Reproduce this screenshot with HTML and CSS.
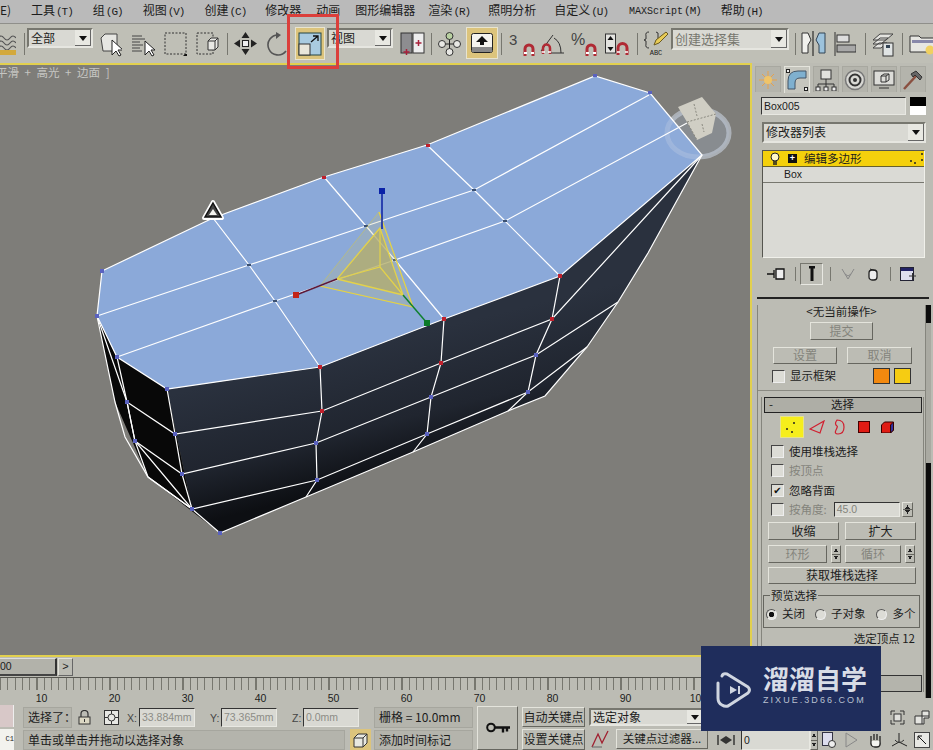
FILE: index.html
```html
<!DOCTYPE html>
<html lang="zh">
<head>
<meta charset="utf-8">
<title>3ds Max</title>
<link rel="stylesheet" href="styles.css">
</head>
<body>
<div class="app">
  <nav class="menu">
    <span class="m-e">E)</span><span class="m-tool">工具<i>(T)</i></span><span>组<i>(G)</i></span><span>视图<i>(V)</i></span><span>创建<i>(C)</i></span><span class="mn1">修改器</span><span class="mn5">动画</span><span class="mn5">图形编辑器</span><span class="mn7">渲染<i>(R)</i></span><span class="mn2">照明分析</span><span class="mn2">自定义<i>(U)</i></span><span class="m-script">MAXScript<i>(M)</i></span><span>帮助<i>(H)</i></span>
  </nav>

  <div class="toolbar">
    <svg width="16" height="26" viewBox="0 0 16 26"><path d="M-2 7q3-4 6 0t6 0 6 0M-2 12q3-4 6 0t6 0 6 0M-2 17q3-4 6 0t6 0 6 0" fill="none" stroke="#555" stroke-width="1.2"/><rect x="-2" y="19" width="18" height="5" fill="#d3a93c"/></svg>
    <i class="sep ml8"></i>
    <div class="dd tb-dd ml2"><span>全部</span><b class="arrow"></b></div>
    <svg class="ml7" width="22" height="26" viewBox="0 0 22 26"><path d="M1 7l4-4h12v15l-4 2H3z" fill="#e6e6e2" stroke="#444"/><path d="M12 9v15l4-4 3 5 2-1-3-5h5z" fill="#fff" stroke="#222"/></svg>
    <svg class="ml9" width="25" height="26" viewBox="0 0 25 26"><path d="M1 5h10M1 8h13M1 11h8M1 14h11M1 17h8M1 20h10" stroke="#444"/><path d="M14 10v14l4-4 3 5 2-1-3-5h4z" fill="#fff" stroke="#222"/></svg>
    <svg class="ml8" width="23" height="26" viewBox="0 0 23 26"><rect x="1" y="2" width="21" height="21" fill="none" stroke="#333" stroke-dasharray="2 1.5"/><path d="M21 23h2v2h-4z" fill="#111"/></svg>
    <svg class="ml9" width="24" height="26" viewBox="0 0 24 26"><rect x="1" y="2" width="16" height="21" fill="none" stroke="#333" stroke-dasharray="2 1.5"/><path d="M12 10l3-3h7v9l-3 3h-7z" fill="#e8e8e4" stroke="#333"/><path d="M12 10h7v9M19 10l3-3" fill="none" stroke="#333"/></svg>
    <i class="sep ml7"></i>
    <svg class="ml6" width="23" height="26" viewBox="0 0 23 26"><path d="M11.500 1l4 6h-8zM11.500 24l4-6h-8zM0 12.500l6-4v8zM23 12.500l-6-4v8z" fill="#222"/><rect x="8.500" y="9.500" width="6" height="6" fill="#eee" stroke="#222"/></svg>
    <svg class="ml10" width="20" height="26" viewBox="0 0 20 26"><path d="M12 4A10 10 0 1 0 19 20" fill="none" stroke="#555" stroke-width="1.6"/><path d="M9 1l5 3-5 4z" fill="#555"/></svg>
    <div class="scale-btn ml8">
      <svg width="24" height="24" viewBox="0 0 24 24"><rect x="1" y="1" width="22" height="22" fill="#a9cbe0" stroke="#244"/><rect x="1" y="12" width="11" height="11" fill="#e9e6da" stroke="#333"/><path d="M13 10l7-6M15 4h5v5" fill="none" stroke="#111" stroke-width="1.300"/></svg>
    </div>
    <div class="dd tb-dd ml2"><span>视图</span><b class="arrow"></b></div>
    <svg class="ml7" width="25" height="26" viewBox="0 0 25 26"><rect x="1" y="2" width="11" height="20" fill="#8d8d90" stroke="#333"/><rect x="13" y="2" width="11" height="20" fill="#eee" stroke="#333"/><path d="M6.500 18v6M3.500 21h6M18.500 9v6M15.500 12h6" stroke="#a8203a" stroke-width="1.500"/></svg>
    <i class="sep ml6"></i>
    <svg class="ml6" width="23" height="26" viewBox="0 0 23 26"><path d="M11.500 7v12M4 13h15" stroke="#222"/><circle cx="11.500" cy="5" r="3.500" fill="#b8d0a0" stroke="#333"/><circle cx="4" cy="13" r="3.500" fill="#e8e8e4" stroke="#333"/><circle cx="19" cy="13" r="3.500" fill="#e8e8e4" stroke="#333"/><circle cx="11.500" cy="21" r="3.500" fill="#e8e8e4" stroke="#333"/></svg>
    <div class="active-btn ml5">
      <svg width="22" height="20" viewBox="0 0 22 20"><rect x="0.500" y="0.500" width="21" height="19" rx="2" fill="#f4f3ee" stroke="#222"/><rect x="1" y="14" width="20" height="5" fill="#888"/><path d="M11 3l6 6h-4v3H9V9H5z" fill="#111"/></svg>
    </div>
    <i class="sep ml3"></i>
    <div class="snap ml7"><span class="snap-t">3</span><svg class="mag" width="12" height="14" viewBox="0 0 12 14"><path d="M2 13V6a4 4 0 0 1 8 0v7" fill="none" stroke="#b02a34" stroke-width="3"/><path d="M1 10h3M8 10h3" stroke="#fff" stroke-width="2"/></svg></div>
    <svg class="ml5" width="25" height="26" viewBox="0 0 25 26"><path d="M1 20L13 4M24 22H10M14 7q7 4 7 15" fill="none" stroke="#333"/><path d="M3 23v-6a3.500 3.500 0 0 1 7 0v6" fill="none" stroke="#b02a34" stroke-width="2.500"/><path d="M2 21h3M8 21h3" stroke="#fff" stroke-width="1.500"/></svg>
    <div class="snap ml6"><span class="snap-t snap-p">%</span><svg class="mag" width="12" height="14" viewBox="0 0 12 14"><path d="M2 13V6a4 4 0 0 1 8 0v7" fill="none" stroke="#b02a34" stroke-width="3"/><path d="M1 10h3M8 10h3" stroke="#fff" stroke-width="2"/></svg></div>
    <svg class="ml8" width="24" height="26" viewBox="0 0 24 26"><rect x="0.500" y="3" width="10" height="19" fill="#e4e4e0" stroke="#333"/><path d="M5.500 5l3 4h-6zM5.500 20l3-4h-6z" fill="#111"/><path d="M13 24v-7a4.500 4.500 0 0 1 9 0v7" fill="none" stroke="#b02a34" stroke-width="3"/><path d="M12 21h3M20 21h3" stroke="#fff" stroke-width="1.500"/></svg>
    <i class="sep ml8"></i>
    <div class="abc ml5"><svg width="26" height="18" viewBox="0 0 26 18"><path d="M6 1Q2 1 3 5t-2 4q3 0 2 4t3 4" fill="none" stroke="#333"/><path d="M13 1q3 0 2 4t2 4" fill="none" stroke="#333"/><path d="M11 14l2-5 10-8 2 2-9 9z" fill="#e9cc56" stroke="#6a5a20"/></svg><span>ABC</span></div>
    <div class="dd set-dd ml2"><span>创建选择集</span><b class="arrow"></b></div>
    <i class="sep ml6"></i>
    <svg class="ml5" width="25" height="26" viewBox="0 0 25 26"><path d="M1 2h6l3 7-3 5v8H1z" fill="#f0f0ec" stroke="#333"/><path d="M12 0v25" stroke="#111"/><path d="M24 2h-6l-3 7 3 5v8h6z" fill="#9cc2dc" stroke="#345"/></svg>
    <svg class="ml8" width="22" height="26" viewBox="0 0 22 26"><path d="M1 1v24" stroke="#333"/><rect x="3" y="4" width="12" height="7" fill="#ddd" stroke="#333"/><rect x="3" y="14" width="19" height="7" fill="#a8a8a8" stroke="#333"/></svg>
    <i class="sep ml9"></i>
    <svg class="ml6" width="22" height="26" viewBox="0 0 22 26"><path d="M1 9l7-6h13l-7 6zM1 13l7-6h8l-7 6zM1 17l6-5h8l-6 5z" fill="#e4e4e0" stroke="#444"/><rect x="11" y="12" width="10" height="13" fill="#e0e4e4" stroke="#333"/><rect x="14" y="14" width="4" height="3" fill="#345"/></svg>
    <i class="sep ml8"></i>
    <svg class="ml6" width="25" height="26" viewBox="0 0 25 26"><path d="M1 5h9l2 2h13v14H1z" fill="#e6e6e2" stroke="#333"/><rect x="3" y="9" width="22" height="3" fill="#88a"/><circle cx="21" cy="19" r="4.500" fill="#f0d060"/></svg>
  </div>

  <div class="stage">
    <div class="left-col">
      <div class="viewport">
        <svg class="scene" width="750" height="590" viewBox="0 65 750 590">
          <defs>
            <linearGradient id="sideFill" gradientUnits="userSpaceOnUse" x1="430" y1="330" x2="462" y2="458">
              <stop offset="0" stop-color="#2a313e"/>
              <stop offset="0.6" stop-color="#20252f"/>
              <stop offset="1" stop-color="#0d0f13"/>
            </linearGradient>
          </defs>
          <ellipse cx="698" cy="133" rx="31" ry="24" fill="#8f9396" fill-opacity="0.45" stroke="#b8bcc0" stroke-width="5" stroke-opacity="0.6"/>
          <polygon points="167,389 320,367 444,319 560,276 702,155 648,253 618,302 587,347 545,396 508,411 413,452 306,497 220,533 192,509" fill="url(#sideFill)"/>
          <polygon points="97,316 117,357 167,389 192,509 220,533 148,477 115,402" fill="#080808"/>
          <polygon points="102,271 213,218 324,177 427,145 595,76 650,93 702,155 560,276 444,319 320,367 167,389 117,357 97,316" fill="#8ba9d9"/>
          <ellipse cx="698" cy="133" rx="31" ry="24" fill="#a8bfdf" fill-opacity="0.12" stroke="#c6d2e4" stroke-width="5" stroke-opacity="0.3"/>
          <g class="cube">
            <polygon points="678,107 702,97 716,114 712,133 697,140 687,122" fill="#d0cec4"/>
            <path d="M687 122l29-8M687 122l10 18M694 104l3 12M702 124l2 8" fill="none" stroke="#8a8980" stroke-dasharray="2 1.500"/>
          </g>
          <g class="edges">
            <polyline points="102,271 97,316 117,357 167,389 320,367 444,319 560,276 702,155 650,93 595,76 427,145 324,177 213,218 102,271"/>
            <polyline points="97,316 249,265 366,226 474,190 649,95"/>
            <polyline points="117,357 275,301 395,260 505,221 687,123"/>
            <polyline points="213,218 249,265 275,301 320,367"/>
            <polyline points="324,177 366,226 395,260 444,319"/>
            <polyline points="427,145 474,190 505,221 560,276"/>
            <polyline points="702,155 648,253 618,302 587,347 545,396 508,411 413,452 306,497 220,533 192,509 148,477 125,437 115,402 97,316"/>
            <polyline points="97,316 127,402 135,441 148,477"/>
            <polyline points="117,357 127,402 135,441 192,509"/>
            <polyline points="127,402 175,434 322,411 441,363 552,319 702,155"/>
            <polyline points="135,441 182,474 316,443 431,397 536,355 618,302"/>
            <polyline points="148,477 192,509 317,480 427,434 528,392 587,347"/>
            <polyline points="167,389 175,434 182,474 192,509"/>
            <polyline points="320,367 322,411 316,443 317,480 306,497"/>
            <polyline points="444,319 441,363 431,397 427,434 413,452"/>
            <polyline points="560,276 552,319 536,355 528,392 508,411"/>
          </g>
          <g class="dots-red">
            <rect x="322" y="176" width="4" height="3"/><rect x="426" y="144" width="4" height="3"/><rect x="318" y="365" width="4" height="4"/><rect x="442" y="317" width="4" height="4"/><rect x="558" y="274" width="4" height="4"/><rect x="320" y="409" width="4" height="4"/><rect x="439" y="361" width="4" height="4"/><rect x="550" y="317" width="4" height="4"/>
          </g>
          <g class="dots-blue">
            <rect x="100" y="269" width="4" height="4"/><rect x="95" y="314" width="4" height="4"/><rect x="115" y="355" width="4" height="4"/><rect x="165" y="387" width="4" height="4"/><rect x="173" y="432" width="4" height="4"/><rect x="180" y="472" width="4" height="4"/><rect x="190" y="507" width="4" height="4"/><rect x="218" y="531" width="4" height="4"/><rect x="125" y="400" width="4" height="4"/><rect x="133" y="439" width="4" height="4"/><rect x="314" y="441" width="4" height="4"/><rect x="315" y="478" width="4" height="4"/><rect x="429" y="395" width="4" height="4"/><rect x="425" y="432" width="4" height="4"/><rect x="534" y="353" width="4" height="4"/><rect x="526" y="390" width="4" height="4"/><rect x="593" y="74" width="4" height="3"/><rect x="648" y="91" width="4" height="3"/>
          </g>
          <g class="dots-dark">
            <rect x="247" y="264" width="4" height="2"/><rect x="273" y="300" width="4" height="2"/><rect x="364" y="225" width="4" height="2"/><rect x="393" y="259" width="4" height="2"/><rect x="472" y="189" width="4" height="2"/><rect x="503" y="220" width="4" height="2"/>
          </g>
          <g class="gizmo">
            <polygon points="379,212 320,286 413,307" fill="#c8c070" fill-opacity="0.2" stroke="#c9c35c" stroke-opacity="0.6"/>
            <polygon points="380,228 337,279 403,295" fill="#b4ad6a" fill-opacity="0.75" stroke="#e3d24a" stroke-width="1.300"/>
            <path d="M380 228v39M337 279l43-12 23 28M379 212l34 95M320 286l93 21" fill="none" stroke="#e3d24a" stroke-width="1.200"/>
            <path d="M382 191v38" stroke="#0a1fa0" stroke-width="1.500"/>
            <path d="M296 295l41-16" stroke="#5c1838" stroke-width="1.500"/>
            <path d="M403 295l24 28" stroke="#108030" stroke-width="1.500"/>
            <rect x="379" y="188" width="6" height="6" fill="#0a22a8"/>
            <rect x="293" y="292" width="6" height="6" fill="#c22418"/>
            <rect x="424" y="320" width="6" height="6" fill="#0c7a28"/>
          </g>
          <g class="warn">
            <polygon points="213,202 222,218 204,218" fill="#fff" stroke="#fff" stroke-width="4" stroke-linejoin="round"/>
            <polygon points="213,203 221,217 205,217" fill="#444" stroke="#111" stroke-width="1.500"/>
            <polygon points="213,209 217,215 209,215" fill="#f4f4f0"/>
          </g>
        </svg>
        <div class="vp-label">平滑 + 高光 + 边面 ]</div>
      </div>
      <div class="slider-row">
        <div class="slider">00</div>
        <div class="slider-next">&gt;</div>
      </div>
      <div class="ruler">
        <div class="ticks"></div>
        <div class="ruler-nums"><span>10</span><span>20</span><span>30</span><span>40</span><span>50</span><span>60</span><span>70</span><span>80</span><span>90</span><span>100</span></div>
      </div>
    </div>

    <aside class="panel">
      <div class="tabs">
        <div class="tab t-sun"><svg width="22" height="22" viewBox="0 0 22 22"><path d="M11 2v18M2 11h18M5 5l12 12M17 5L5 17" stroke="#e8a24a" stroke-width="1"/><circle cx="11" cy="11" r="4" fill="#f0c468"/></svg></div>
        <div class="tab tab-on"><svg width="22" height="22" viewBox="0 0 22 22"><path d="M2 20V12Q2 2 12 2h8v7h-6q-5 0-5 5v6z" fill="#7fb0cf" stroke="#456"/><rect x="0.500" y="0.500" width="3" height="3" fill="#eee" stroke="#222"/><rect x="18.500" y="18.500" width="3" height="3" fill="#eee" stroke="#222"/></svg></div>
        <div class="tab"><svg width="22" height="22" viewBox="0 0 22 22"><rect x="6" y="1" width="10" height="9" fill="#e2e2de" stroke="#333"/><path d="M11 10v5M3 18v-3h16v3M11 15v3" fill="none" stroke="#333"/><rect x="1" y="18" width="4" height="4" fill="#eee" stroke="#333"/><rect x="9" y="18" width="4" height="4" fill="#eee" stroke="#333"/><rect x="17" y="18" width="4" height="4" fill="#eee" stroke="#333"/></svg></div>
        <div class="tab"><svg width="22" height="22" viewBox="0 0 22 22"><circle cx="11" cy="11" r="9.500" fill="#d8d8d4" stroke="#777" stroke-width="1.500"/><circle cx="11" cy="11" r="5.500" fill="none" stroke="#333" stroke-width="2"/><circle cx="11" cy="11" r="2" fill="#333"/></svg></div>
        <div class="tab"><svg width="22" height="22" viewBox="0 0 22 22"><rect x="1" y="2" width="20" height="14" fill="#dcdcd8" stroke="#333"/><path d="M8 7l3-2h5v6l-3 2H8zM8 7h5v6M13 7l3-2" fill="none" stroke="#333"/><path d="M6 19h10" stroke="#333"/></svg></div>
        <div class="tab"><svg width="22" height="22" viewBox="0 0 22 22"><path d="M2 20L14 7" stroke="#8a5040" stroke-width="2.500"/><path d="M9 5l5-3 6 6-2 3-5-5-2 2z" fill="#666" stroke="#333"/></svg></div>
      </div>
      <div class="name-row">
        <div class="field name-field">Box005</div>
        <div class="swatch"></div>
      </div>
      <div class="dd mod-dd"><span>修改器列表</span><b class="arrow"></b></div>
      <div class="stack">
        <div class="stack-on">
          <svg class="bulb" width="12" height="14" viewBox="0 0 12 14"><circle cx="6" cy="5" r="4" fill="#fff8c8" stroke="#222"/><path d="M4 10h4M4 12h4" stroke="#222" stroke-width="1.300"/></svg>
          <b class="plus">+</b>
          <span>编辑多边形</span>
          <svg class="spark" width="14" height="14" viewBox="0 0 14 14"><path d="M12 2h2M1 9h2M5 11h2M12 8h2" stroke="#222" stroke-width="1.500"/></svg>
        </div>
        <div class="stack-row">Box</div>
      </div>
      <div class="stack-tools">
        <svg class="st-pin" width="18" height="14" viewBox="0 0 18 14"><path d="M0 7h7M7 3v8M9 2h8v10H9z" fill="#eee" stroke="#111" stroke-width="1.300"/></svg>
        <i class="sep st-a"></i>
        <div class="st-btn"><svg width="8" height="16" viewBox="0 0 8 16"><path d="M1 1h6M4 1v14" stroke="#111" stroke-width="3" fill="none"/></svg></div>
        <i class="sep st-b"></i>
        <svg class="st-v" width="14" height="14" viewBox="0 0 14 14"><path d="M1 2l6 10 6-10M4 7l3 2 3-2" fill="none" stroke="#888"/></svg>
        <svg class="st-c" width="10" height="14" viewBox="0 0 10 14"><rect x="1" y="3" width="8" height="10" rx="3" fill="#eee" stroke="#222" stroke-width="1.300"/><path d="M2 2l6 2" stroke="#222"/></svg>
        <i class="sep st-d"></i>
        <svg class="st-e" width="17" height="14" viewBox="0 0 17 14"><rect x="0.500" y="0.500" width="13" height="13" fill="#dde" stroke="#223"/><rect x="1" y="1" width="12" height="3" fill="#226"/><path d="M9 9h7M12.500 6v7" stroke="#333"/></svg>
      </div>
      <div class="black-line"></div>
      <div class="rollouts">
        <div class="rollout-body">
          <div class="op-title">&lt;无当前操作&gt;</div>
          <div class="btn off commit">提交</div>
          <div class="btn-row set-row"><div class="btn off w64">设置</div><div class="btn off w65">取消</div></div>
          <div class="frame-row">
            <i class="check"></i><span class="lab">显示框架</span>
            <b class="sw sw-o"></b><b class="sw sw-y"></b>
          </div>
          <div class="divider"></div>
          <div class="sel-group">
            <div class="bar"><span class="bar-m">-</span><span class="bar-t">选择</span></div>
            <div class="sub-icons">
              <div class="sub-on"><svg width="22" height="20" viewBox="0 0 22 20"><path d="M5 12h2M12 6h2M10 15h2" stroke="#222" stroke-width="1.500"/></svg></div>
              <svg class="si-1" width="16" height="14" viewBox="0 0 16 14"><path d="M1 9L15 1l-4 12z" fill="none" stroke="#d02030" stroke-width="1.200"/></svg>
              <svg class="si-2" width="14" height="16" viewBox="0 0 14 16"><path d="M5 1q7 0 7 7t-6 7q-4 0-2-4t1-4Q2 5 5 1z" fill="none" stroke="#d02030" stroke-width="1.200"/></svg>
              <svg class="si-3" width="12" height="12" viewBox="0 0 12 12"><rect x="0.500" y="0.500" width="11" height="11" fill="#e01c14" stroke="#400"/></svg>
              <svg class="si-4" width="13" height="12" viewBox="0 0 13 12"><path d="M0.500 4l3-3h9v8l-3 3h-9z" fill="#e01c14" stroke="#300"/><path d="M9.500 12V4l3-3v8z" fill="#3030a0" stroke="#300"/></svg>
            </div>
            <div class="chk chk-1"><i class="check"></i><span>使用堆栈选择</span></div>
            <div class="chk chk-2 dis"><i class="check"></i><span>按顶点</span></div>
            <div class="chk chk-3"><i class="check on">✔</i><span>忽略背面</span></div>
            <div class="chk chk-4 dis"><i class="check"></i><span>按角度:</span><div class="field angle">45.0</div><div class="spin"></div></div>
            <div class="btn-row grow-row"><div class="btn w71">收缩</div><div class="btn w71">扩大</div></div>
            <div class="btn-row ring-row"><div class="btn off w59">环形</div><div class="spin s10"></div><div class="btn off w56">循环</div><div class="spin s10"></div></div>
            <div class="btn get-btn">获取堆栈选择</div>
            <div class="preview">
              <span class="legend">预览选择</span>
              <div class="radios">
                <i class="radio on"></i><span class="r1">关闭</span>
                <i class="radio r2"></i><span class="r1">子对象</span>
                <i class="radio r3"></i><span class="r4">多个</span>
              </div>
            </div>
            <div class="sel-count">选定顶点 12</div>
            <div class="low-bar"></div>
          </div>
        </div>
        <div class="scroll"><div class="thumb"></div></div>
      </div>
    </aside>
  </div>

  <div class="status">
    <div class="col-a">
      <div class="pink"></div>
      <div class="mini">C1</div>
    </div>
    <div class="col-b">
      <div class="st-row">
        <div class="cell w49">选择了：</div>
        <svg class="lock" width="13" height="15" viewBox="0 0 13 15"><path d="M3 7V4a3.500 3.500 0 0 1 7 0v3" fill="none" stroke="#333" stroke-width="1.200"/><rect x="1" y="7" width="11" height="7" fill="#dcd8c4" stroke="#333"/><path d="M6.500 9v3" stroke="#333"/></svg>
        <svg class="abs" width="15" height="15" viewBox="0 0 15 15"><rect x="0.500" y="0.500" width="14" height="14" fill="#e8e8e4" stroke="#333"/><circle cx="7.500" cy="7.500" r="3.500" fill="none" stroke="#333"/><path d="M7.500 0v4M7.500 11v4M0 7.500h4M11 7.500h4" stroke="#333"/></svg>
        <span class="axis ax-x">X:</span><div class="field coord">33.884mm</div>
        <span class="axis ax-y">Y:</span><div class="field coord">73.365mm</div>
        <span class="axis ax-y">Z:</span><div class="field coord">0.0mm</div>
        <div class="cell grid-cell">栅格 = 10.0mm</div>
      </div>
      <div class="st-row st-row2">
        <div class="cell msg">单击或单击并拖动以选择对象</div>
        <div class="tag-ico"><svg width="15" height="15" viewBox="0 0 15 15"><path d="M1 5l4-4h9v9l-4 4H1zM1 5h9v9M10 5l4-4" fill="#e8e8e0" stroke="#333"/></svg></div>
        <div class="cell time-cell">添加时间标记</div>
      </div>
    </div>
    <div class="key-btn"><svg width="24" height="12" viewBox="0 0 24 12"><circle cx="5" cy="5.500" r="3.800" fill="none" stroke="#111" stroke-width="2"/><path d="M9 5.500h15M17 5.500v5M21 5.500v4" stroke="#111" stroke-width="2.400"/></svg></div>
    <div class="col-k">
      <div class="btn k-btn">自动关键点</div>
      <div class="btn k-btn k2">设置关键点</div>
    </div>
    <div class="col-f">
      <div class="dd obj-dd"><span>选定对象</span><b class="arrow"></b></div>
      <div class="f-row">
        <svg class="curve" width="20" height="20" viewBox="0 0 20 20"><path d="M1 18L7 5l4 9 6-12" fill="none" stroke="#a02030" stroke-width="1.300"/><path d="M1 18h10" stroke="#666"/></svg>
        <div class="btn filter">关键点过滤器...</div>
      </div>
    </div>
    <div class="col-n">
      <div class="n-top">
        <svg width="15" height="15" viewBox="0 0 15 15"><path d="M1 5V1h4M10 1h4v4M14 10v4h-4M5 14H1v-4" fill="none" stroke="#333"/><rect x="4" y="4" width="7" height="7" fill="#e0e0dc" stroke="#333"/></svg>
        <svg class="n-gap" width="16" height="15" viewBox="0 0 16 15"><path d="M1 6h7V1h7v7h-5v6H1z" fill="#e4e4e0" stroke="#333"/><path d="M8 6h7M8 6v8" stroke="#333"/></svg>
      </div>
      <div class="n-bot">
        <svg class="n-key" width="18" height="12" viewBox="0 0 18 12"><path d="M1 1v10" stroke="#222" stroke-width="1.300"/><path d="M9 2L3 6l6 4zM9 2l6 4-6 4z" fill="#333"/><path d="M17 1v10" stroke="#222" stroke-width="1.300"/></svg>
        <div class="frame-wrap"><div class="field frame">0</div><div class="spin s8"></div></div>
        <svg class="n-cfg" width="14" height="16" viewBox="0 0 14 16"><rect x="0.500" y="0.500" width="10" height="13" fill="#dde" stroke="#334"/><circle cx="10" cy="12" r="3.500" fill="#eee" stroke="#333"/></svg>
        <svg class="n-play" width="13" height="16" viewBox="0 0 13 16"><path d="M1 1l11 7-11 7z" fill="none" stroke="#888"/></svg>
        <svg class="n-hand" width="15" height="16" viewBox="0 0 15 16"><path d="M3 9V4M6 8V2M9 8V2M12 9V4M3 9q-1 6 4 6h2q4 0 3-6" fill="#f4f4f0" stroke="#222" stroke-width="1.300"/></svg>
        <svg class="n-axes" width="17" height="16" viewBox="0 0 17 16"><path d="M8 1v9M8 10l-7 4M8 10l8 4" stroke="#222" fill="none"/><path d="M4 8q4 5 9 0" stroke="#333" fill="none"/></svg>
        <svg class="n-zoom" width="16" height="16" viewBox="0 0 16 16"><rect x="0.500" y="0.500" width="15" height="15" fill="#e8e8e4" stroke="#444"/><path d="M4 4l8 8M4 4h4M4 4v4" stroke="#111" fill="none"/></svg>
      </div>
    </div>
  </div>

  <div class="annot"></div>
  <div class="logo">
    <svg class="logo-ico" width="36" height="38" viewBox="0 0 36 38"><path d="M6 5Q7 2 11 3l21 13q3 3 0 6L12 35q-3 1-6-1-4-2-4-7V12" fill="none" stroke="#cfd5e0" stroke-width="3" stroke-linejoin="round" stroke-linecap="round"/><path d="M14 15l7 4-7 4z" fill="#cfd5e0"/><path d="M23 15v8" stroke="#cfd5e0" stroke-width="2"/></svg>
    <div class="logo-text">
      <div class="logo-cn">溜溜自学</div>
      <div class="logo-en">ZIXUE.3D66.COM</div>
    </div>
  </div>
</div>
</body>
</html>
```

FILE: styles.css
```css
* { box-sizing: border-box; }
html, body { margin: 0; padding: 0; }
body { background: #bcbcb4; }
i { font-style: normal; }

.app {
  position: relative;
  width: 933px;
  height: 750px;
  overflow: hidden;
  display: flex;
  flex-direction: column;
  background: #bcbcb4;
  color: #1c1c1c;
  font: 12px/1.2 "Noto Sans CJK SC", "Liberation Sans", sans-serif;
}

/* menu */
.menu {
  display: flex;
  align-items: center;
  height: 24px;
  flex: none;
  gap: 20px;
  background: #bababa;
  border-bottom: 1px solid #8f8f8a;
  white-space: nowrap;
  padding-bottom: 2px;
}
.menu i { font: 11px "Liberation Mono", monospace; letter-spacing: -1px; margin-left: 1px; }
.m-e { width: 11px; }
.m-script { font: 10px "Liberation Mono", monospace; margin-left: 1px; }
.m-tool { margin-left: 0; }
.mn1 { margin-left: -1px; }
.mn2 { margin-left: -2px; }
.mn5 { margin-left: -5px; }
.mn7 { margin-left: -7px; }

/* toolbar */
.toolbar {
  display: flex;
  align-items: center;
  height: 39px;
  flex: none;
  background: #bfbfb6;
  overflow: hidden;
}
.toolbar > svg { flex: none; }
.sep { display: block; width: 1px; height: 22px; background: #77776f; flex: none; }
.ml2 { margin-left: 2px; } .ml3 { margin-left: 3px; } .ml5 { margin-left: 5px; }
.ml6 { margin-left: 6px; } .ml7 { margin-left: 7px; } .ml8 { margin-left: 8px; }
.ml9 { margin-left: 9px; } .ml10 { margin-left: 10px; }

.dd {
  display: flex;
  align-items: center;
  justify-content: space-between;
  flex: none;
  background: #d9d9d3;
  border: 2px solid;
  border-color: #77776f #e6e6e0 #e6e6e0 #77776f;
  padding-left: 2px;
  font-size: 12px;
  white-space: nowrap;
}
.arrow {
  position: relative;
  width: 16px;
  height: 100%;
  background: #e8e8e2;
  border-right: 1px solid #666;
  border-bottom: 1px solid #666;
  flex: none;
}
.arrow::after {
  content: "";
  position: absolute;
  left: 4px;
  top: calc(50% - 2px);
  border: 4px solid transparent;
  border-top: 5px solid #111;
  border-bottom: 0;
}
.tb-dd { width: 66px; height: 20px; align-self: flex-start; margin-top: 4px; }
.set-dd { width: 118px; height: 22px; color: #77776f; font-size: 13px; align-self: flex-start; margin-top: 4px; }
.scale-btn, .active-btn {
  display: flex;
  align-items: center;
  justify-content: center;
  flex: none;
  width: 30px;
  height: 33px;
  background: #dcc47c;
  border: 1px solid #e8e4cf;
  align-self: flex-start;
  margin-top: 3px;
}
.active-btn { width: 32px; height: 32px; }
.snap { position: relative; width: 26px; height: 26px; flex: none; }
.snap-t { position: absolute; left: 0; top: 0; font: 15px "Liberation Sans", sans-serif; color: #444; }
.snap-p { font-size: 16px; }
.mag { position: absolute; right: 0; bottom: 0; }
.abc { display: flex; flex-direction: column; width: 26px; flex: none; }
.abc span { font: 7px/8px "Liberation Mono", monospace; text-align: center; }

/* main area */
.stage { display: flex; height: 642px; flex: none; }
.left-col { width: 752px; flex: none; }
.viewport {
  position: relative;
  height: 594px;
  background: #7e7d79;
  border: solid #e2d04e;
  border-width: 2px 2px 2px 0;
  overflow: hidden;
}
.scene { display: block; }
.vp-label {
  position: absolute;
  left: -4px;
  top: 1px;
  color: #c6c6c2;
  font-size: 11.500px;
  word-spacing: 3px;
  white-space: nowrap;
}
.edges polyline { fill: none; stroke: #fff; stroke-width: 1.200; }
.dots-red rect { fill: #c0202c; }
.dots-blue rect { fill: #5a62c0; }
.dots-dark rect { fill: #3c5070; }

.slider-row { display: flex; height: 18px; margin-top: 1px; }
.slider {
  width: 57px;
  background: #b2b2aa;
  border-right: 2px solid #333;
  border-bottom: 2px solid #444;
  border-top: 1px solid #ddd;
  font: 10.500px/15px "Liberation Sans", sans-serif;
  overflow: hidden;
}
.slider-next {
  width: 15px;
  margin-left: 1px;
  text-align: center;
  border: 1px solid;
  border-color: #e2e2da #666 #666 #e2e2da;
  font: 11px/15px "Liberation Sans", sans-serif;
}
.ruler { height: 29px; margin-top: 1px; border-top: 1px solid #55554f; }
.ticks {
  height: 12px;
  background: repeating-linear-gradient(90deg, #77776f 0 1px, transparent 1px 7.300px);
}
.ruler-nums { display: flex; padding-left: 5px; font: 10.500px/14px "Liberation Sans", sans-serif; margin-top: 1px; }
.ruler-nums span { width: 73px; text-align: center; }

/* command panel */
.panel { width: 181px; flex: none; padding-left: 1px; }
.tabs { display: flex; gap: 3px; padding: 3px 0 0 2px; height: 29px; }
.tab {
  display: flex; align-items: center; justify-content: center;
  width: 26px; height: 26px;
  border: 1px solid #a8a8a0;
  border-bottom: 0;
  background: #b4b4ac;
}
.tab-on { background: #c6c6be; border-color: #e4e4dc; height: 27px; }
.name-row { display: flex; gap: 4px; margin: 5px 0 0 8px; }
.field {
  background: #d9d9d3;
  border: 1px solid;
  border-color: #333 #e8e8e2 #e8e8e2 #333;
  font: 10.500px/16px "Liberation Sans", sans-serif;
  padding-left: 2px;
  white-space: nowrap;
  overflow: hidden;
}
.name-field { width: 145px; height: 18px; }
.swatch { width: 16px; height: 18px; background: linear-gradient(#000 50%, #fff 50%); }
.mod-dd { width: 164px; height: 21px; margin: 7px 0 0 9px; font-size: 12px; }
.stack {
  width: 163px; height: 108px;
  margin: 7px 0 0 9px;
  background: #dadad5;
  border: 1px solid;
  border-color: #55554f #f0f0ea #f0f0ea #55554f;
}
.stack-on {
  display: flex; align-items: center;
  height: 16px;
  background: #f4d00c;
  border-bottom: 1px solid #66602c;
  font-size: 11.500px;
}
.bulb { margin-left: 6px; }
.plus {
  width: 9px; height: 9px; margin: 0 7px 0 7px;
  background: #111; color: #fff;
  font: 700 9px/9px "Liberation Sans", sans-serif; text-align: center;
}
.spark { margin-left: auto; margin-right: 1px; }
.stack-row {
  height: 16px; padding-left: 21px;
  border-bottom: 1px solid #77776f;
  font: 10.500px/15px "Liberation Sans", sans-serif;
}
.stack-tools { display: flex; align-items: center; height: 22px; margin-top: 5px; }
.stack-tools .sep { height: 14px; }
.st-pin { margin-left: 14px; }
.st-a { margin-left: 10px; }
.st-btn {
  display: flex; align-items: center; justify-content: center;
  width: 23px; height: 22px; margin-left: 4px;
  border: 1px solid; border-color: #77776f #e8e8e2 #e8e8e2 #77776f;
}
.st-b { margin-left: 7px; }
.st-v { margin-left: 10px; }
.st-c { margin-left: 13px; }
.st-d { margin-left: 12px; }
.st-e { margin-left: 9px; }
.black-line { height: 2px; margin: 12px 4px 0 4px; background: #222; }
.rollouts { display: flex; margin: 6px 0 0 4px; }
.rollout-body {
  width: 169px;
  height: 393px;
  border-left: 1px solid #85857d;
  border-right: 1px solid #85857d;
  font-size: 11.500px;
}
.scroll { width: 5px; height: 393px; background: #0c0c0c; padding-top: 18px; margin-left: 0; }
.thumb { height: 140px; background: #aaaaa2; }

.op-title { height: 12px; line-height: 12px; text-align: center; }
.btn {
  display: flex; align-items: center; justify-content: center;
  flex: none;
  height: 18px;
  background: #bcbcb4;
  border: 1px solid;
  border-color: #e4e4dc #66665f #66665f #e4e4dc;
  font-size: 12px;
  white-space: nowrap;
}
.off { color: #84847c; }
.commit { width: 63px; margin: 5px 0 0 52px; }
.btn-row { display: flex; }
.set-row { margin: 7px 0 0 15px; gap: 10px; }
.w64 { width: 64px; height: 17px; } .w65 { width: 65px; height: 17px; }
.frame-row { display: flex; align-items: center; height: 16px; margin: 4px 0 0 14px; }
.check {
  display: block; flex: none;
  width: 13px; height: 13px;
  background: #dcdcd6;
  border: 1px solid;
  border-color: #444 #eee #eee #444;
  font: 700 10px/11px "DejaVu Sans", sans-serif;
  text-align: center;
  color: #111;
}
.lab { margin-left: 5px; }
.sw { width: 17px; height: 16px; border: 1px solid #333; flex: none; }
.sw-o { background: #f3890f; margin-left: 37px; }
.sw-y { background: #f6cc12; margin-left: 4px; }
.divider { height: 1px; background: #8a8a82; margin-top: 6px; }
.sel-group {
  margin: 6px 1px 0 3px;
  height: 295px;
  border-left: 1px solid #85857d;
  border-right: 1px solid #85857d;
}
.bar {
  display: flex; align-items: center;
  width: 158px; height: 16px; margin-left: 2px;
  background: #aeaea6;
  border: 1px solid #222;
}
.bar-m { margin-left: 4px; }
.bar-t { flex: 1; text-align: center; padding-right: 9px; }
.sub-icons { display: flex; align-items: center; height: 22px; margin: 3px 0 0 18px; }
.sub-on {
  display: flex; align-items: center; justify-content: center;
  width: 24px; height: 22px; flex: none;
  background: #f6ee1c;
  border: 1px solid #e6e28c;
}
.si-1 { margin-left: 5px; } .si-2 { margin-left: 7px; }
.si-3 { margin-left: 12px; } .si-4 { margin-left: 11px; }
.chk { display: flex; align-items: center; height: 13px; margin-left: 9px; }
.chk span { margin-left: 5px; white-space: nowrap; }
.chk-1 { margin-top: 7px; }
.chk-2, .chk-3 { margin-top: 6px; }
.chk-3 { margin-top: 7px; }
.chk-4 { margin-top: 5px; height: 15px; }
.dis { color: #84847c; }
.angle { width: 66px; height: 15px; margin-left: 7px; color: #84847c; line-height: 13px; }
.spin {
  flex: none;
  width: 11px; height: 15px; margin-left: 2px;
  border: 1px solid; border-color: #e4e4dc #66665f #66665f #e4e4dc;
  background:
    linear-gradient(#66665f, #66665f) 0 50% / 100% 1px no-repeat,
    conic-gradient(from 150deg at 50% 2px, #222 60deg, transparent 0) 0 0 / 100% 6px no-repeat,
    conic-gradient(from -30deg at 50% 4px, #222 60deg, transparent 0) 0 100% / 100% 6px no-repeat;
}
.s10 { width: 10px; height: 18px; margin: 0 4px; }
.s8 { width: 8px; height: 20px; margin: 0; }
.grow-row { margin: 5px 0 0 6px; gap: 6px; }
.w71 { width: 71px; }
.ring-row { margin: 5px 0 0 6px; }
.w59 { width: 59px; } .w56 { width: 56px; }
.get-btn { width: 148px; height: 17px; margin: 4px 0 0 6px; }
.preview {
  position: relative;
  width: 157px; height: 33px;
  margin: 11px 0 0 1px;
  border: 1px solid #66665f;
}
.legend {
  position: absolute; left: 6px; top: -8px;
  padding: 0 1px;
  background: #bcbcb4;
  line-height: 14px;
}
.radios { display: flex; align-items: center; height: 16px; margin: 10px 0 0 2px; white-space: nowrap; }
.radio {
  display: block; flex: none;
  width: 11px; height: 11px;
  border-radius: 50%;
  background: #dcdcd6;
  border: 1px solid; border-color: #555 #eee #eee #555;
}
.radio.on { background: radial-gradient(circle, #111 0 2.500px, #e4e4de 3px); }
.r1 { margin-left: 5px; }
.r2 { margin-left: 10px; }
.r3 { margin-left: 10px; }
.r4 { margin-left: 6px; }
.sel-count { margin-top: 3px; height: 14px; line-height: 14px; text-align: right; padding-right: 8px; }
.low-bar { width: 154px; height: 17px; margin: 30px 0 0 6px; border: 1px solid #333; background: #b4b4ac; }

/* status */
.status { display: flex; height: 45px; flex: none; }
.col-a { width: 14px; flex: none; }
.pink { height: 22px; background: #d8c8c8; border-right: 1px solid #eee; }
.mini { height: 21px; margin-top: 2px; background: #f2f2ee; font: 7px/21px "Liberation Mono", monospace; text-align: right; }
.col-b { width: 450px; margin-left: 9px; flex: none; }
.st-row { display: flex; align-items: center; height: 21px; margin-top: 2px; white-space: nowrap; }
.st-row2 { height: 20px; }
.cell { height: 100%; background: #b4b4ac; border: 1px solid #a6a69e; padding-left: 4px; line-height: 18px; font-size: 12px; overflow: hidden; }
.w49 { width: 49px; flex: none; }
.lock { margin-left: 6px; flex: none; }
.abs { margin-left: 13px; flex: none; }
.axis { font: 10.500px "Liberation Sans", sans-serif; flex: none; width: 10px; color: #444; }
.ax-x { margin-left: 8px; }
.ax-y { margin-left: 15px; width: 9px; }
.coord { width: 56px; height: 19px; margin-left: 2px; color: #8c8c86; line-height: 17px; flex: none; }
.grid-cell { width: 99px; margin-left: 15px; flex: none; }
.msg { width: 322px; flex: none; }
.tag-ico {
  display: flex; align-items: center; justify-content: center;
  width: 21px; height: 22px; margin-left: 5px; flex: none;
  background: #dcc47c;
}
.time-cell { width: 99px; margin-left: 3px; flex: none; }
.key-btn {
  display: flex; align-items: center; justify-content: center;
  width: 41px; height: 44px; margin: 1px 0 0 4px; flex: none;
  border: 1px solid; border-color: #e4e4dc #66665f #66665f #e4e4dc;
}
.col-k { width: 63px; margin: 2px 0 0 4px; flex: none; }
.k-btn { width: 63px; height: 20px; }
.k2 { height: 21px; margin-top: 2px; }
.col-f { width: 119px; margin: 3px 0 0 4px; flex: none; }
.obj-dd { width: 116px; height: 18px; }
.f-row { display: flex; align-items: center; margin-top: 3px; }
.curve { margin-left: 2px; }
.filter { width: 92px; height: 20px; margin-left: 5px; font-size: 11.500px; }
.col-n { flex: 1; margin-left: 0; min-width: 0; }
.n-top { display: flex; justify-content: flex-end; height: 25px; padding: 5px 3px 0 0; }
.n-gap { margin-left: 9px; }
.n-bot { display: flex; align-items: center; height: 20px; }
.n-key { margin-left: 9px; flex: none; }
.frame-wrap { display: flex; margin-left: 6px; flex: none; }
.frame { width: 69px; height: 20px; line-height: 18px; font-size: 10.500px; }
.n-cfg { margin-left: 4px; flex: none; }
.n-play { margin-left: 9px; flex: none; }
.n-hand { margin-left: 10px; flex: none; }
.n-axes { margin-left: 8px; flex: none; }
.n-zoom { margin-left: 6px; flex: none; }

/* overlays */
.annot {
  position: absolute;
  left: 287px; top: 14px;
  width: 52px; height: 55px;
  border: 3px solid #db3f3b;
}
.logo {
  position: absolute;
  left: 701px; top: 646px;
  width: 180px; height: 85px;
  display: flex;
  align-items: center;
  padding: 0 0 6px 15px;
  background: #1f2d5c;
  color: #d8dce6;
}
.logo-ico { flex: none; margin-top: 8px; }
.logo-text { margin-left: 11px; }
.logo-cn { font-size: 26px; line-height: 26px; font-weight: 700; white-space: nowrap; }
.logo-en { font: 9px/11px "Liberation Sans", sans-serif; letter-spacing: 2.050px; white-space: nowrap; color: #b9c0d0; margin-top: 4px; }
```
